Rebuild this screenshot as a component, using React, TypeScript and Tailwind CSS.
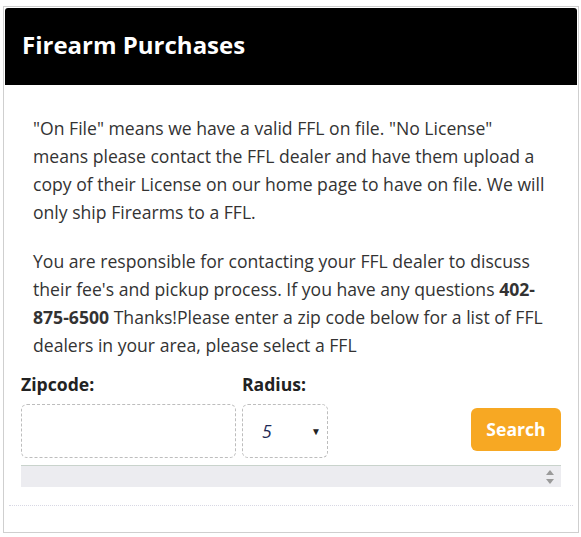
export default function App() {
  return (
    <div className="min-h-screen bg-white font-['Open_Sans',sans-serif] pt-[6px] pl-[3px]">
      <div className="w-[576px] h-[527px] border border-[#cfcfcf] p-px flex flex-col">
        {/* Header */}
        <div className="h-[77px] bg-black rounded-t-[3px] flex items-center pl-[17px] pb-[3px]">
          <h1 className="text-[24px] font-bold text-white leading-none">Firearm Purchases</h1>
        </div>

        <div className="px-[16px] pt-[29px]">
          <div className="pl-3 w-[525px] text-[17.6px] leading-[28px] text-[#333]">
            <p className="mb-[21px]">
              "On File" means we have a valid FFL on file. "No License" means please contact the FFL dealer and have them upload a copy of their License on our home page to have on file. We will only ship Firearms to a FFL.
            </p>
            <p>
              You are responsible for contacting your FFL dealer to discuss their fee's and pickup process. If you have any questions <b>402-875-6500</b> Thanks!Please enter a zip code below for a list of FFL dealers in your area, please select a FFL
            </p>
          </div>

          {/* Form */}
          <div className="flex items-start mt-[13px]">
            <div className="w-[215px]">
              <label className="block text-[17.6px] font-bold text-[#222] leading-6 mb-[8px]">Zipcode:</label>
              <input className="w-[215px] h-[54px] border border-dashed border-[#bdbdbd] rounded-[6px] bg-white outline-none" />
            </div>
            <div className="ml-[6px]">
              <label className="block text-[17.6px] font-bold text-[#222] leading-6 mb-[8px]">Radius:</label>
              <div className="w-[86px] h-[54px] border border-dashed border-[#bdbdbd] rounded-[6px] flex items-center justify-between pl-[19px] pr-[6px]">
                <span className="italic text-[17.6px] text-[#1e2a55]">5</span>
                <span className="text-[10px] text-[#222]">▼</span>
              </div>
            </div>
            <div className="flex-1 flex justify-end pt-[36px]">
              <button className="w-[90px] h-[43px] rounded-[6px] bg-[#f7a823] text-white font-bold text-[17.6px]">
                Search
              </button>
            </div>
          </div>

          {/* Results list */}
          <div className="mt-[7px] h-[22px] bg-[#ececf0] border-t border-[#c9d3cc] flex items-center justify-end pr-[6px]">
            <svg width="10" height="16" viewBox="0 0 10 16">
              <path d="M5 1 L9 6 L1 6 Z" fill="#9a9a9a" />
              <path d="M5 15 L9 10 L1 10 Z" fill="#9a9a9a" />
            </svg>
          </div>
        </div>

        <div className="mt-[18px] mx-[4px] border-t border-dotted border-[#d8d8e4]" />
      </div>
    </div>
  );
}
